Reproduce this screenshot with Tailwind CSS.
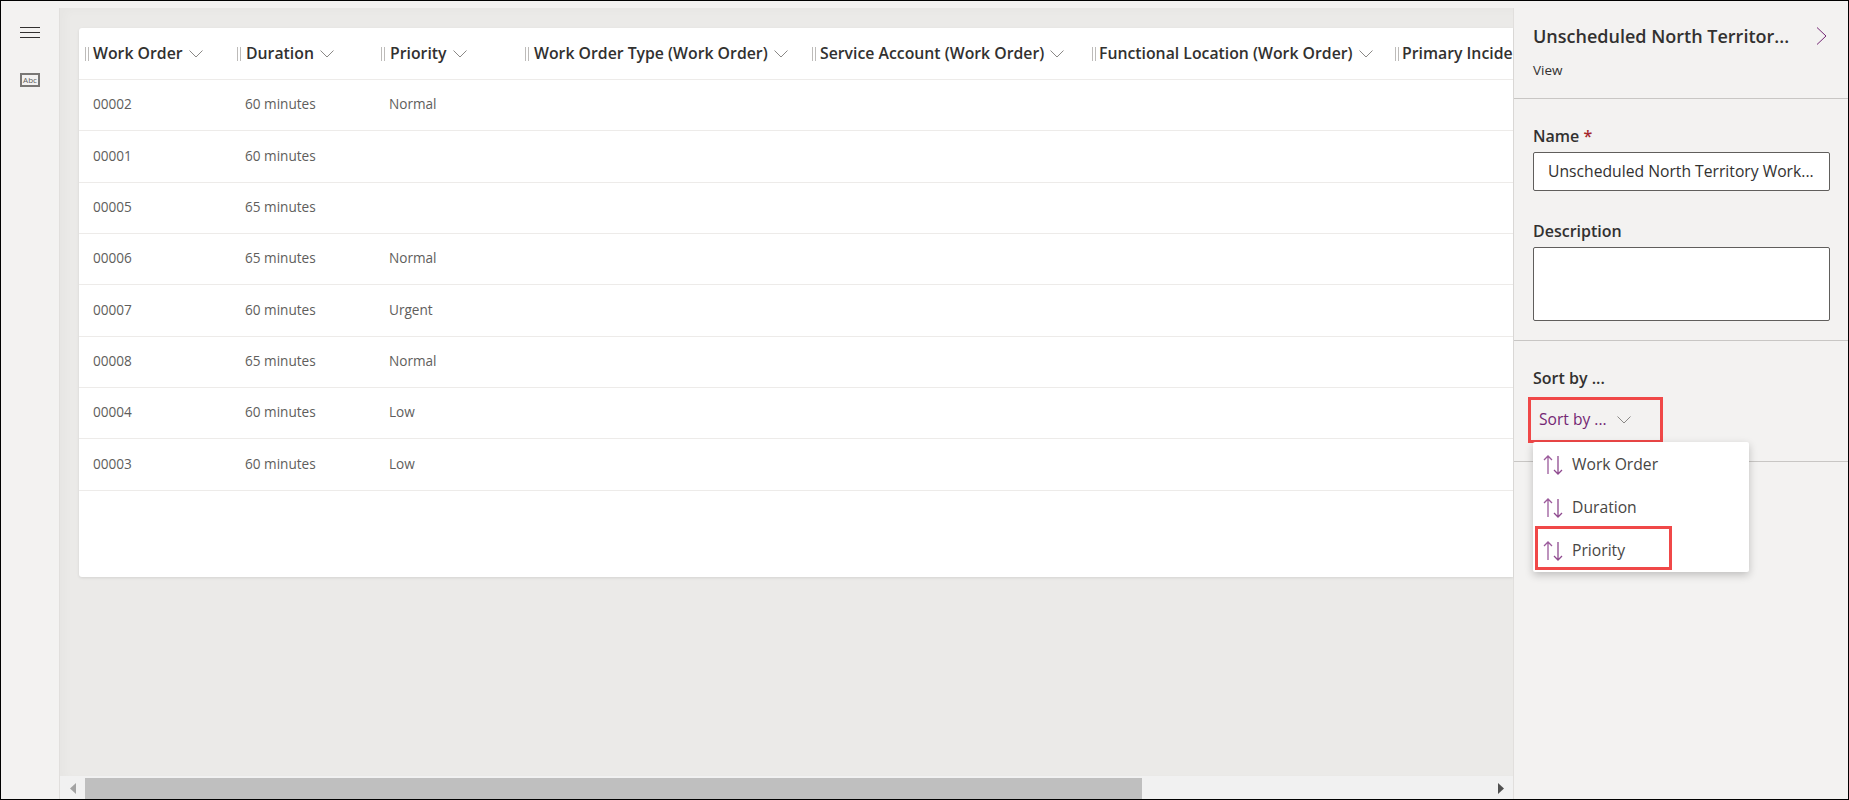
<!doctype html>
<html lang="en">
  <head>
    <meta charset="UTF-8" />
    <title>Unscheduled North Territory Work Orders</title>
    <script src="https://cdn.jsdelivr.net/npm/@tailwindcss/browser@4"></script>
  </head>
  <body class="font-['Open_Sans','Noto_Sans',sans-serif]">
    <div class="h-[800px] w-[1849px] border border-black bg-[#f3f2f1] flex flex-col overflow-hidden">
      <div class="h-[7px] shrink-0 bg-[#f3f2f1]"></div>
      <div class="flex flex-1 min-h-0">
        <!-- left rail -->
        <aside class="w-[59px] shrink-0 border-r border-[#e1dfdd] flex flex-col items-start pl-[19px] pt-[19px]">
          <svg class="w-[20px] h-[12px]" viewBox="0 0 20 12" fill="none" stroke="#323130" stroke-width="1">
            <path d="M0 .5h20M0 5.5h20M0 10.5h20" />
          </svg>
          <div class="mt-[34px] w-[20px] h-[14px] border-2 border-[#797775] flex items-center justify-center text-[8px] leading-none text-[#605e5c]">Abc</div>
        </aside>

        <!-- main area -->
        <main class="w-[1454px] shrink-0 flex flex-col border-r border-[#e1dfdd]">
          <div class="flex-1 min-h-0 bg-[#ebeae8] pl-[19px] pt-[20px] shadow-[inset_6px_3px_8px_rgba(0,0,0,0.02)]">
            <div class="h-[549px] bg-white rounded-tl-[3px] rounded-bl-[3px] overflow-hidden shadow-[0_1px_3px_rgba(0,0,0,0.1)]">
              <div class="h-[52px] flex items-center border-b border-[#edebe9] text-[15.800px] font-semibold text-[#323130] whitespace-nowrap">
                <div class="w-[158px] shrink-0 pl-[6px] flex items-center"><span class="w-[4px] h-[14px] mr-[4px] border-x border-[#bdbbb9]"></span>Work Order<svg class="ml-[6px] w-[14px] h-[8px]" viewBox="0 0 14 8" fill="none" stroke="#8a8886"><path d="M.5.5 7 7 13.500.5" /></svg></div>
                <div class="w-[144px] shrink-0 flex items-center"><span class="w-[4px] h-[14px] mr-[5px] border-x border-[#bdbbb9]"></span>Duration<svg class="ml-[6px] w-[14px] h-[8px]" viewBox="0 0 14 8" fill="none" stroke="#8a8886"><path d="M.5.5 7 7 13.500.5" /></svg></div>
                <div class="w-[144px] shrink-0 flex items-center"><span class="w-[4px] h-[14px] mr-[5px] border-x border-[#bdbbb9]"></span>Priority<svg class="ml-[6px] w-[14px] h-[8px]" viewBox="0 0 14 8" fill="none" stroke="#8a8886"><path d="M.5.5 7 7 13.500.5" /></svg></div>
                <div class="w-[287px] shrink-0 flex items-center"><span class="w-[4px] h-[14px] mr-[5px] border-x border-[#bdbbb9]"></span>Work Order Type (Work Order)<svg class="ml-[6px] w-[14px] h-[8px]" viewBox="0 0 14 8" fill="none" stroke="#8a8886"><path d="M.5.5 7 7 13.500.5" /></svg></div>
                <div class="w-[280px] shrink-0 flex items-center"><span class="w-[4px] h-[14px] mr-[4px] border-x border-[#bdbbb9]"></span>Service Account (Work Order)<svg class="ml-[6px] w-[14px] h-[8px]" viewBox="0 0 14 8" fill="none" stroke="#8a8886"><path d="M.5.5 7 7 13.500.5" /></svg></div>
                <div class="w-[303px] shrink-0 flex items-center"><span class="w-[4px] h-[14px] mr-[3px] border-x border-[#bdbbb9]"></span>Functional Location (Work Order)<svg class="ml-[6px] w-[14px] h-[8px]" viewBox="0 0 14 8" fill="none" stroke="#8a8886"><path d="M.5.5 7 7 13.500.5" /></svg></div>
                <div class="flex-1 min-w-0 overflow-hidden flex items-center"><span class="w-[4px] h-[14px] mr-[3px] shrink-0 border-x border-[#bdbbb9]"></span>Primary Incident Type</div>
              </div>
              <div class="text-[13.6px] text-[#605e5c]">
                <div class="h-[51.33px] flex items-center pb-[1px] border-b border-[#edebe9]"><span class="w-[158px] pl-[14px]">00002</span><span class="w-[144px] pl-[8px]">60 minutes</span><span class="pl-[8px]">Normal</span></div>
                <div class="h-[51.33px] flex items-center pb-[1px] border-b border-[#edebe9]"><span class="w-[158px] pl-[14px]">00001</span><span class="w-[144px] pl-[8px]">60 minutes</span></div>
                <div class="h-[51.33px] flex items-center pb-[1px] border-b border-[#edebe9]"><span class="w-[158px] pl-[14px]">00005</span><span class="w-[144px] pl-[8px]">65 minutes</span></div>
                <div class="h-[51.33px] flex items-center pb-[1px] border-b border-[#edebe9]"><span class="w-[158px] pl-[14px]">00006</span><span class="w-[144px] pl-[8px]">65 minutes</span><span class="pl-[8px]">Normal</span></div>
                <div class="h-[51.33px] flex items-center pb-[1px] border-b border-[#edebe9]"><span class="w-[158px] pl-[14px]">00007</span><span class="w-[144px] pl-[8px]">60 minutes</span><span class="pl-[8px]">Urgent</span></div>
                <div class="h-[51.33px] flex items-center pb-[1px] border-b border-[#edebe9]"><span class="w-[158px] pl-[14px]">00008</span><span class="w-[144px] pl-[8px]">65 minutes</span><span class="pl-[8px]">Normal</span></div>
                <div class="h-[51.33px] flex items-center pb-[1px] border-b border-[#edebe9]"><span class="w-[158px] pl-[14px]">00004</span><span class="w-[144px] pl-[8px]">60 minutes</span><span class="pl-[8px]">Low</span></div>
                <div class="h-[51.33px] flex items-center pb-[1px] border-b border-[#edebe9]"><span class="w-[158px] pl-[14px]">00003</span><span class="w-[144px] pl-[8px]">60 minutes</span><span class="pl-[8px]">Low</span></div>
              </div>
            </div>
          </div>
          <!-- horizontal scrollbar -->
          <div class="h-[23px] shrink-0 bg-[#f1f1f1] flex items-center pt-[1px]">
            <div class="w-[25px] h-full flex items-center justify-center">
              <svg class="w-[6px] h-[11px]" viewBox="0 0 6 11" fill="#a3a3a3"><path d="M6 0v11L0 5.500z" /></svg>
            </div>
            <div class="w-[1057px] h-[21px] bg-[#bfbfbf]"></div>
            <div class="flex-1 h-full flex items-center justify-end pr-[9px]">
              <svg class="w-[6px] h-[11px]" viewBox="0 0 6 11" fill="#505050"><path d="M0 0v11l6-5.500z" /></svg>
            </div>
          </div>
        </main>

        <!-- right panel -->
        <section class="relative flex-1 min-w-0 bg-[#f3f2f1] text-[#323130]">
          <div class="h-[91px] border-b border-[#c8c6c4] pl-[19px] pr-[21px] pt-[17px]">
            <div class="flex items-center justify-between h-[22px]">
              <span class="text-[18px] font-semibold whitespace-nowrap">Unscheduled North Territor...</span>
              <svg class="w-[11px] h-[18px]" viewBox="0 0 11 18" fill="none" stroke="#742774" stroke-width="1"><path d="M1 .5 10 9 1 17.500" /></svg>
            </div>
            <p class="mt-[15px] text-[13.500px] leading-[16px]">View</p>
          </div>
          <div class="h-[242px] border-b border-[#c8c6c4] pl-[19px] pr-[18px] pt-[27px]">
            <label class="block text-[16px] leading-[20px] font-semibold">Name <span class="text-[#a4262c]">*</span></label>
            <div class="mt-[6px] h-[39px] bg-white border border-[#605e5c] rounded-[2px] flex items-center pl-[14px] text-[15.700px] whitespace-nowrap overflow-hidden">Unscheduled North Territory Work...</div>
            <label class="block mt-[30px] text-[16px] leading-[20px] font-semibold">Description</label>
            <div class="mt-[6px] h-[74px] bg-white border border-[#605e5c] rounded-[2px]"></div>
          </div>
          <div class="h-[121px] border-b border-[#c8c6c4] pl-[14px] pt-[27px]">
            <label class="block pl-[5px] text-[16px] leading-[20px] font-semibold">Sort by ...</label>
            <div class="mt-[9px] w-[135px] h-[46px] border-[3px] border-[#f04848] flex items-center pl-[8px] text-[15.600px] text-[#742774]">
              Sort by ...
              <svg class="ml-[10px] w-[14px] h-[8px]" viewBox="0 0 14 8" fill="none" stroke="#8a8886"><path d="M.5.5 7 7 13.500.5" /></svg>
            </div>
          </div>

          <!-- dropdown menu -->
          <div class="absolute left-[19px] top-[434px] w-[216px] h-[130px] pt-[1px] bg-white rounded-[2px] shadow-[0_3px_8px_rgba(0,0,0,0.22)] text-[15.700px] text-[#484644]">
            <div class="h-[43px] flex items-center pl-[10px]">
              <svg class="w-[20px] h-[20px]" viewBox="0 0 20 20" fill="none" stroke="#9b5a9b" stroke-width="1.300"><path d="M5 19V1M1 5l4-4 4 4" /><path stroke="#8f4a8f" d="M15 1v18M11 15l4 4 4-4" /></svg>
              <span class="ml-[9px]">Work Order</span>
            </div>
            <div class="h-[43px] flex items-center pl-[10px]">
              <svg class="w-[20px] h-[20px]" viewBox="0 0 20 20" fill="none" stroke="#9b5a9b" stroke-width="1.300"><path d="M5 19V1M1 5l4-4 4 4" /><path stroke="#8f4a8f" d="M15 1v18M11 15l4 4 4-4" /></svg>
              <span class="ml-[9px]">Duration</span>
            </div>
            <div class="h-[43px] flex items-center pl-[10px]">
              <svg class="w-[20px] h-[20px]" viewBox="0 0 20 20" fill="none" stroke="#9b5a9b" stroke-width="1.300"><path d="M5 19V1M1 5l4-4 4 4" /><path stroke="#8f4a8f" d="M15 1v18M11 15l4 4 4-4" /></svg>
              <span class="ml-[9px]">Priority</span>
            </div>
            <div class="absolute left-[2px] top-[84px] w-[137px] h-[44px] border-[3px] border-[#f04848]"></div>
          </div>
        </section>
      </div>
    </div>
  </body>
</html>
